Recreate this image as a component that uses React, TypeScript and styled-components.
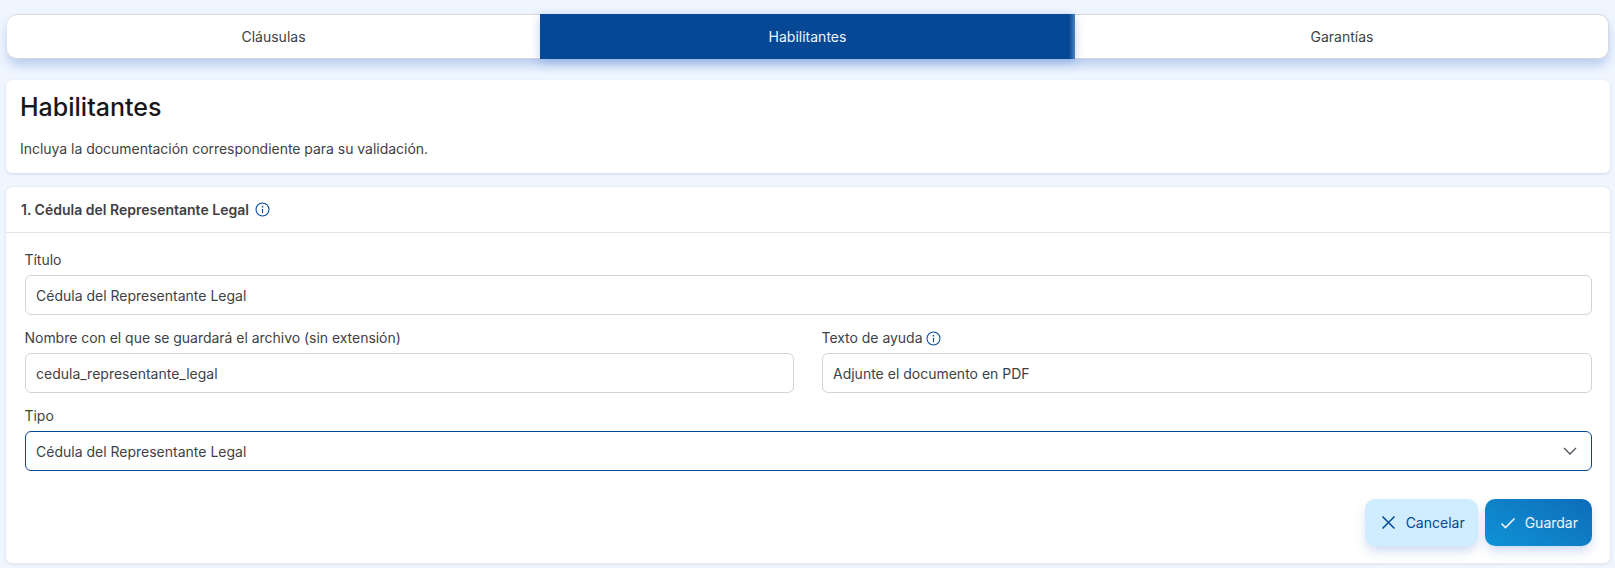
import React from "react";
import styled, { createGlobalStyle } from "styled-components";

const Global = createGlobalStyle`
  html, body { margin: 0; padding: 0; background: #eff6ff; height: 568px; overflow: hidden; }
  body { font-family: Inter, "Liberation Sans", sans-serif; color: #3f3f46; }
  * { box-sizing: border-box; }
`;

const Page = styled.div`
  display: flex;
  flex-direction: column;
  padding: 14px 5px 0 6px;
  height: 568px;
  overflow: hidden;
`;

const Tabs = styled.div`
  display: grid;
  grid-template-columns: 533px 535px 534px;
  height: 45px;
  margin: 0 1px 21px;
  border-radius: 10px;
  background: #fff;
  border: 1px solid #d8d8de;
  border-left-width: 0;
  box-shadow: 0 7px 12px -1px rgba(30, 90, 190, 0.28);
`;

const Tab = styled.div<{ $active?: boolean }>`
  display: flex;
  align-items: center;
  justify-content: center;
  font-size: 14px;
  margin: -1px 0;
  color: ${(p) => (p.$active ? "#eff6ff" : "#3f3f46")};
  background: ${(p) =>
    p.$active
      ? "linear-gradient(to right, #044896 calc(100% - 6px), #4f7fbd 100%)"
      : "transparent"};
  box-shadow: ${(p) => (p.$active ? "0 3px 10px rgba(30, 90, 190, 0.28)" : "none")};
`;

const Card = styled.section`
  background: #fff;
  border-radius: 6px;
  box-shadow: 0 1px 3px rgba(30, 60, 120, 0.16);
`;

const IntroCard = styled(Card)`
  height: 93px;
  margin-bottom: 14px;
  padding: 13px 14px;
`;

const Title = styled.h1`
  margin: 0;
  font-size: 25px;
  line-height: 29px;
  font-weight: 500;
  color: #18181b;
`;

const Sub = styled.p`
  margin: 17px 0 0;
  font-size: 14px;
  line-height: 20px;
  letter-spacing: -0.03px;
`;

const FormCard = styled(Card)`
  flex: 1;
  max-height: 376px;
  display: flex;
  flex-direction: column;
  box-shadow: 0 0 0 1px #e6eaf2, 0 1px 3px rgba(30, 60, 120, 0.12);
`;

const Head = styled.header`
  display: flex;
  align-items: center;
  gap: 6px;
  height: 46px;
  padding: 0 15px;
  border-bottom: 1px solid #e4e4e7;
  font-size: 14px;
  font-weight: 600;
`;

const Body = styled.div`
  display: flex;
  flex-direction: column;
  padding: 15px 18px 0 19px;
  gap: 11px;
`;

const Row = styled.div`
  display: grid;
  grid-template-columns: 769px 770px;
  justify-content: space-between;
`;

const Field = styled.label`
  display: flex;
  flex-direction: column;
`;

const Label = styled.span`
  display: flex;
  align-items: center;
  gap: 4px;
  height: 24px;
  margin: 0 0 3px -0.5px;
  font-size: 14px;
  line-height: 20px;
  letter-spacing: -0.03px;
`;

const Input = styled.input`
  width: 100%;
  height: 40px;
  padding: 0 10px;
  border-radius: 6px;
  border: 1px solid #d4d4d8;
  background: #fff;
  outline: none;
  font: 14px Inter, "Liberation Sans", sans-serif;
  color: #3f3f46;
`;

const SelectBox = styled.div`
  display: flex;
  align-items: center;
  justify-content: space-between;
  height: 40px;
  padding: 0 14px 0 10px;
  border-radius: 6px;
  border: 1px solid #044896;
  font-size: 14px;
`;

const Actions = styled.div`
  display: flex;
  justify-content: flex-end;
  gap: 7px;
  margin-top: 28px;
  padding-right: 18px;
`;

const Button = styled.button<{ $primary?: boolean }>`
  display: inline-flex;
  align-items: center;
  gap: ${(p) => (p.$primary ? "9px" : "10px")};
  height: 47px;
  padding: 0 ${(p) => (p.$primary ? "14px" : "13px")} 0 ${(p) => (p.$primary ? "15px" : "16px")};
  border: 0;
  border-radius: 10px;
  font: 14px Inter, "Liberation Sans", sans-serif;
  color: ${(p) => (p.$primary ? "#eff6ff" : "#044896")};
  background: ${(p) =>
    p.$primary ? "linear-gradient(30deg, #0f93d6, #0e6cb9)" : "#cfedff"};
  box-shadow: 0 6px 12px -2px rgba(30, 90, 190, 0.25);
`;

const Info = () => (
  <svg width={15} height={15} viewBox="0 0 24 24" fill="none" stroke="#044896" strokeWidth="1.7" strokeLinecap="round">
    <circle cx="12" cy="12" r="10.4" />
    <path d="M12 17v-5.5" />
    <circle cx="12" cy="7.5" r=".5" fill="#044896" />
  </svg>
);

const Chevron = () => (
  <svg width="14" height="8" viewBox="0 0 14 8" fill="none" stroke="#52525b" strokeWidth="1.3">
    <path d="M1 1l6 6 6-6" />
  </svg>
);

const Cross = () => (
  <svg width="15" height="15" viewBox="0 0 15 15" fill="none" stroke="#044896" strokeWidth="1.5">
    <path d="M1.5 1.5l12 12M13.5 1.5l-12 12" />
  </svg>
);

const Check = () => (
  <svg width="16" height="12" viewBox="0 0 16 12" fill="none" stroke="#eff6ff" strokeWidth="1.6">
    <path d="M1.5 6.5l4 4 9-9" />
  </svg>
);

export default function App() {
  return (
    <Page>
      <Global />
      <Tabs>
        <Tab>Cláusulas</Tab>
        <Tab $active>Habilitantes</Tab>
        <Tab>Garantías</Tab>
      </Tabs>
      <IntroCard>
        <Title>Habilitantes</Title>
        <Sub>Incluya la documentación correspondiente para su validación.</Sub>
      </IntroCard>
      <FormCard>
        <Head>
          1. Cédula del Representante Legal <Info />
        </Head>
        <Body>
          <Field>
            <Label>Título</Label>
            <Input readOnly value="Cédula del Representante Legal" />
          </Field>
          <Row>
            <Field>
              <Label>Nombre con el que se guardará el archivo (sin extensión)</Label>
              <Input readOnly value="cedula_representante_legal" />
            </Field>
            <Field>
              <Label>
                Texto de ayuda <Info />
              </Label>
              <Input readOnly value="Adjunte el documento en PDF" />
            </Field>
          </Row>
          <Field>
            <Label>Tipo</Label>
            <SelectBox>
              Cédula del Representante Legal
              <Chevron />
            </SelectBox>
          </Field>
        </Body>
        <Actions>
          <Button>
            <Cross />
            Cancelar
          </Button>
          <Button $primary>
            <Check />
            Guardar
          </Button>
        </Actions>
      </FormCard>
    </Page>
  );
}
